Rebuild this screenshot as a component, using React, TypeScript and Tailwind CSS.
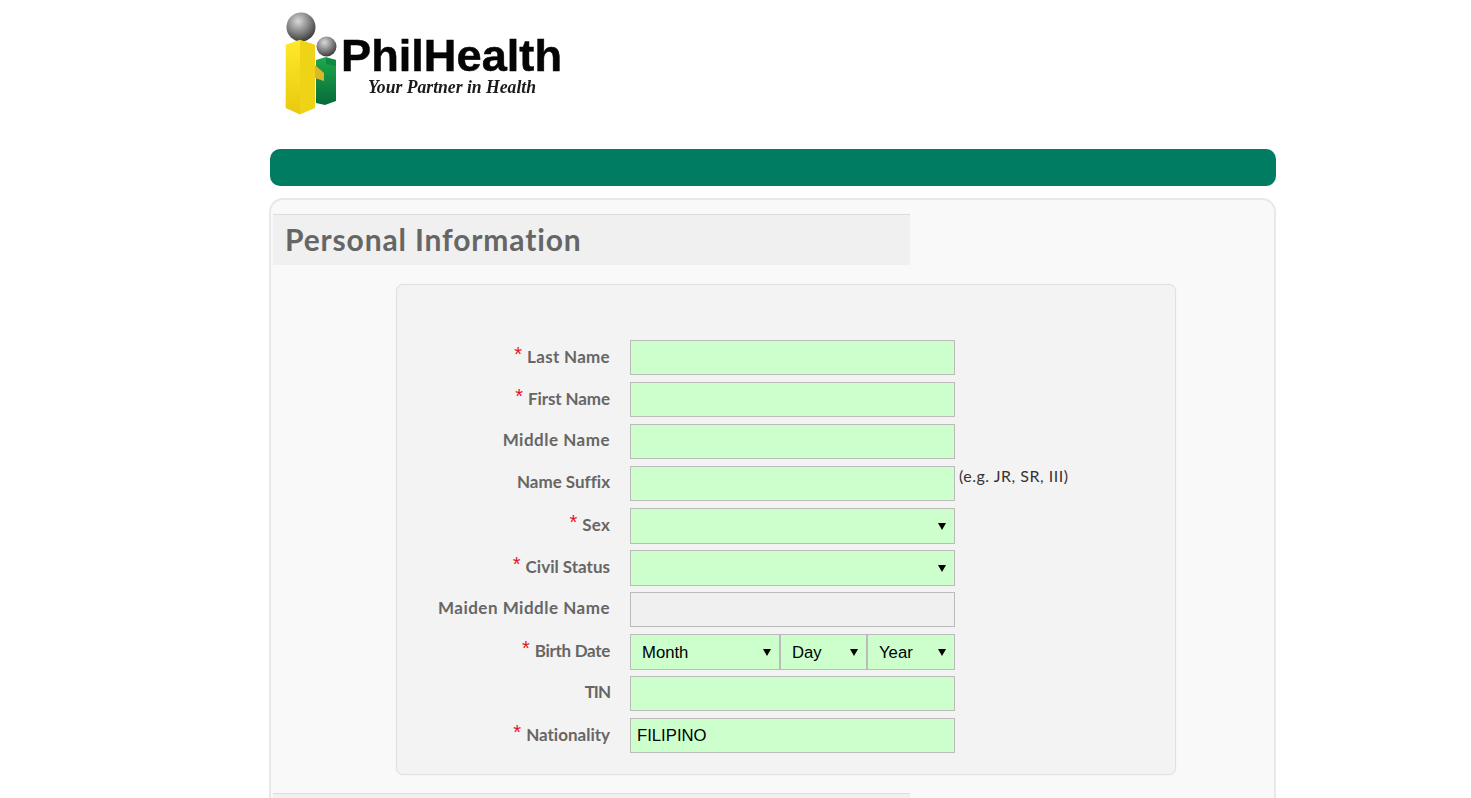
const labelFont = "font-['Lato','Liberation_Sans',sans-serif]";

function Logo() {
  return (
    <svg viewBox="270 0 300 149" className="block w-[300px] h-[149px] blur-[0.4px]">
      <defs>
        <radialGradient id="ball" cx="0.4" cy="0.3" r="0.75">
          <stop offset="0" stopColor="#d8d8d8" />
          <stop offset="0.55" stopColor="#808080" />
          <stop offset="1" stopColor="#333333" />
        </radialGradient>
        <linearGradient id="yellow" x1="0" y1="0" x2="0" y2="1">
          <stop offset="0" stopColor="#ffe92a" />
          <stop offset="1" stopColor="#e8c90e" />
        </linearGradient>
        <linearGradient id="green" x1="0" y1="0" x2="0" y2="1">
          <stop offset="0" stopColor="#1fa84a" />
          <stop offset="1" stopColor="#066b3a" />
        </linearGradient>
      </defs>
      <circle cx="326.5" cy="46.5" r="10" fill="url(#ball)" />
      <path d="M316 60 L326 57 L336 60 L336 101 L325 105 L316 103 Z" fill="url(#green)" />
      <path d="M326 58 L336 60 L336 66 L326 64 Z" fill="#0d8a45" />
      <circle cx="301" cy="27" r="14.5" fill="url(#ball)" />
      <path d="M285.7 44.7 L300 39.7 L300 114.5 L285.7 108 Z" fill="url(#yellow)" />
      <path d="M300 39.7 L315 44.7 L315 108 L300 114.5 Z" fill="#efd317" />
      <path d="M315 65 L324 73 L324 81 L315 78 Z" fill="#d9b92b" />
      <text
        x="341"
        y="71"
        fontFamily="'Liberation Sans', sans-serif"
        fontWeight="700"
        fontSize="45"
        textLength="221"
        lengthAdjust="spacingAndGlyphs"
        fill="#050505"
        stroke="#050505"
        strokeWidth="0.5"
      >
        PhilHealth
      </text>
      <text
        x="368"
        y="93"
        fontFamily="'Liberation Serif', serif"
        fontWeight="700"
        fontStyle="italic"
        fontSize="18"
        textLength="168"
        lengthAdjust="spacingAndGlyphs"
        fill="#1a1a1a"
      >
        Your Partner in Health
      </text>
    </svg>
  );
}

function Label({ text, required, spacing }: { text: string; required?: boolean; spacing: string }) {
  return (
    <label
      className={`${labelFont} ${spacing} ${required ? "h-[33px]" : "h-[31px]"} w-[213px] shrink-0 flex items-center justify-end text-[17px] leading-none font-bold text-[#666666] [font-variant-ligatures:none]`}
    >
      {required && (
        <span className="font-['Liberation_Sans',sans-serif] font-normal text-[20px] tracking-normal text-[#e8101c] mr-[5px] -mt-[5px]">*</span>
      )}
      {text}
    </label>
  );
}

const fieldClass =
  "block h-[35px] w-[325px] border border-[#bbbbbb] bg-[#ccffcc] px-[6px] text-[16.7px] text-black font-['Liberation_Sans',sans-serif] outline-none";

function Select({ width, value }: { width: string; value?: string }) {
  return (
    <div className={`relative ${width}`}>
      <select
        className="block h-[36px] w-full appearance-none border border-[#bbbbbb] bg-[#ccffcc] pl-[11px] pt-[1px] text-[16.7px] text-black font-['Liberation_Sans',sans-serif] outline-none"
        defaultValue={value}
      >
        {value && <option>{value}</option>}
      </select>
      <span className="absolute right-[9px] top-[15px] border-x-[4px] border-t-[7px] border-x-transparent border-t-black" />
    </div>
  );
}

function Row({
  label,
  required,
  spacing,
  children,
}: {
  label: string;
  required?: boolean;
  spacing: string;
  children: React.ReactNode;
}) {
  return (
    <div className="flex h-[42px] items-start">
      <Label text={label} required={required} spacing={spacing} />
      <div className="ml-[20px] flex items-start">{children}</div>
    </div>
  );
}

export default function App() {
  return (
    <div className="h-[798px] overflow-hidden bg-white">
      <div className="ml-[270px] w-[1006px]">
        <Logo />
        <div className="h-[37px] rounded-[10px] bg-[#007c63]" />
        <div className="mt-[12px] h-[700px] -ml-px rounded-[14px] border-2 border-[#e8e8e8] bg-[#f9f9f9] px-[2px] pt-[14px]">
          <div className="h-[51px] w-[637px] border-t border-[#dddddd] bg-[#f0f0f0] pl-[12px]">
            <h1 className={`${labelFont} text-[30px] leading-[48px] font-bold text-[#666666] tracking-[0.85px]`}>
              Personal Information
            </h1>
          </div>
          <div className="ml-[123px] mt-[19px] w-[780px] rounded-[7px] border border-[#e0e0e0] bg-[#f3f3f3] pt-[55px] pb-[21px] shadow-[0_0_2px_rgba(0,0,0,0.06)]">
            <Row label="Last Name" required spacing="tracking-[0.3px]">
              <input className={fieldClass} />
            </Row>
            <Row label="First Name" required spacing="tracking-[-0.1px]">
              <input className={fieldClass} />
            </Row>
            <Row label="Middle Name" spacing="tracking-[0.5px]">
              <input className={fieldClass} />
            </Row>
            <Row label="Name Suffix" spacing="tracking-[0px]">
              <input className={fieldClass} />
              <span className={`${labelFont} ml-[4px] text-[16px] leading-[20px] tracking-[0.5px] text-[#333333]`}>
                (e.g. JR, SR, III)
              </span>
            </Row>
            <Row label="Sex" required spacing="tracking-[0.2px]">
              <Select width="w-[325px]" />
            </Row>
            <Row label="Civil Status" required spacing="tracking-[0px]">
              <Select width="w-[325px]" />
            </Row>
            <Row label="Maiden Middle Name" spacing="tracking-[0.5px]">
              <input disabled className={`${fieldClass} bg-[#f0f0f0]`} />
            </Row>
            <Row label="Birth Date" required spacing="tracking-[-0.3px]">
              <Select width="w-[150px]" value="Month" />
              <Select width="w-[87px]" value="Day" />
              <Select width="w-[88px]" value="Year" />
            </Row>
            <Row label="TIN" spacing="tracking-[-1px]">
              <input className={fieldClass} />
            </Row>
            <div className="flex h-[35px] items-start">
              <Label text="Nationality" required spacing="tracking-[0px]" />
              <input className={`${fieldClass} ml-[20px]`} defaultValue="FILIPINO" />
            </div>
          </div>
          <div className="mt-[18px] h-[51px] w-[637px] border-t border-[#dddddd] bg-[#f0f0f0]" />
        </div>
      </div>
    </div>
  );
}
